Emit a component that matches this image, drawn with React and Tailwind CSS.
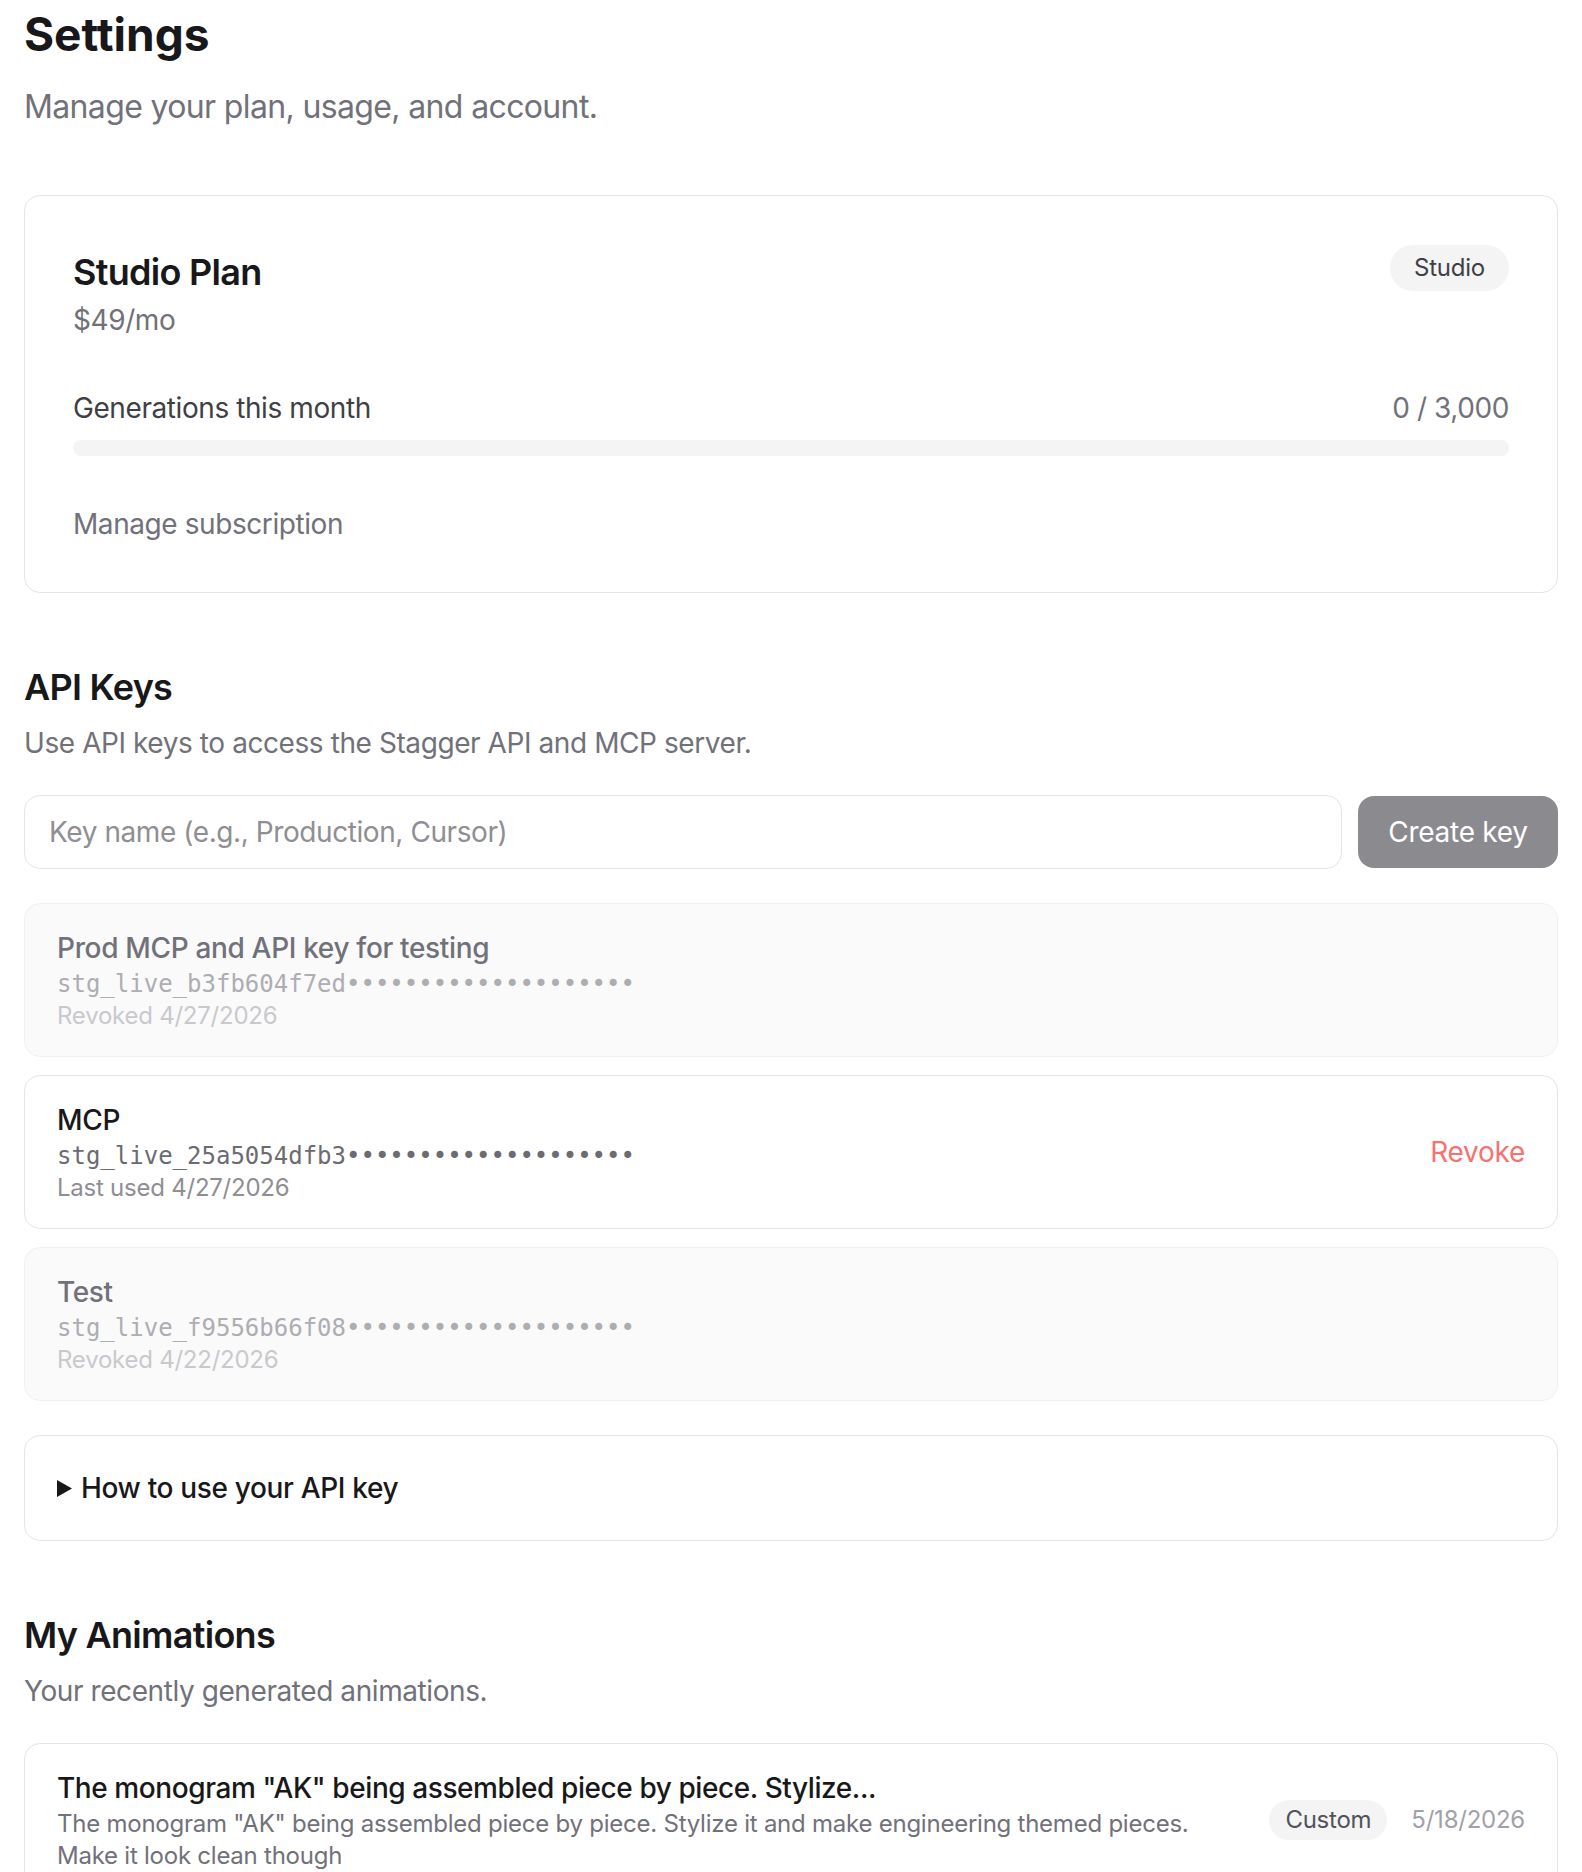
import { useState } from "react";

const keys = [
  { name: "Prod MCP and API key for testing", prefix: "stg_live_b3fb604f7ed", meta: "Revoked 4/27/2026", revoked: true },
  { name: "MCP", prefix: "stg_live_25a5054dfb3", meta: "Last used 4/27/2026", revoked: false },
  { name: "Test", prefix: "stg_live_f9556b66f08", meta: "Revoked 4/22/2026", revoked: true },
];

const dots = "••••••••••••••••••••";

export default function App() {
  const [keyName, setKeyName] = useState("");

  return (
    <div className="min-h-screen bg-white px-6 pt-[6px] pb-6 font-['Inter',sans-serif] text-[#18181b]">
      {/* Header */}
      <h1 className="text-[46px] leading-[56px] font-bold">Settings</h1>
      <p className="mt-[21px] text-[32px] leading-[48px] tracking-[-0.02em] text-[#71717a]">Manage your plan, usage, and account.</p>

      {/* Plan card */}
      <div className="mt-16 rounded-2xl border border-[#e4e4e7] p-12">
        <div className="flex items-start justify-between">
          <div>
            <h2 className="text-[36px] leading-[56px] font-semibold tracking-[-0.02em]">Studio Plan</h2>
            <p className="text-[28px] leading-[40px] tracking-[-0.015em] text-[#71717a]">$49/mo</p>
          </div>
          <span className="mt-px rounded-full bg-[#f4f4f5] px-6 py-[7px] text-[24px] leading-[32px] tracking-[-0.01em] text-[#3f3f46]">
            Studio
          </span>
        </div>
        <div className="mt-12 flex justify-between text-[28px] leading-[40px] tracking-[-0.015em]">
          <span className="text-[#3f3f46]">Generations this month</span>
          <span className="text-[#71717a]">0 / 3,000</span>
        </div>
        <div className="mt-3 h-4 rounded-full bg-[#f4f4f5]" />
        <p className="mt-12 text-[28px] leading-[40px] tracking-[-0.015em] text-[#71717a]">Manage subscription</p>
      </div>

      {/* API Keys */}
      <h2 className="mt-[66px] text-[36px] leading-[56px] font-semibold tracking-[-0.02em]">API Keys</h2>
      <p className="mt-2 text-[28px] leading-[40px] tracking-[-0.015em] text-[#71717a]">
        Use API keys to access the Stagger API and MCP server.
      </p>

      <div className="mt-8 flex items-center gap-4">
        <input
          value={keyName}
          onChange={(e) => setKeyName(e.target.value)}
          placeholder="Key name (e.g., Production, Cursor)"
          className="h-[74px] flex-1 rounded-2xl border border-[#e4e4e7] px-6 text-[28px] tracking-[-0.015em] outline-none placeholder:text-[#8e8e93]"
        />
        <button className="h-[72px] w-[200px] rounded-2xl bg-[#8b8b8f] text-[28px] tracking-[-0.01em] text-white">Create key</button>
      </div>

      <div className="mt-[34px] flex flex-col gap-[18px]">
        {keys.map((k) => (
          <div
            key={k.prefix}
            className={`flex items-center justify-between rounded-2xl border px-8 py-6 ${
              k.revoked ? "border-[#f1f1f2] bg-[#fafafa]" : "border-[#e4e4e7] bg-white"
            }`}
          >
            <div>
              <p
                className={`text-[28px] leading-[40px] font-medium tracking-[-0.012em] ${
                  k.revoked ? "text-[#71717a]" : "text-[#18181b]"
                }`}
              >
                {k.name}
              </p>
              <p
                className={`font-['DejaVu_Sans_Mono',monospace] text-[24px] leading-[32px] ${
                  k.revoked ? "text-[#adadb2]" : "text-[#6b6b71]"
                }`}
              >
                {k.prefix}
                {dots}
              </p>
              <p className={`text-[24px] leading-[32px] tracking-[-0.01em] ${k.revoked ? "text-[#c9c9cd]" : "text-[#8e8e93]"}`}>
                {k.meta}
              </p>
            </div>
            {!k.revoked && <button className="text-[28px] leading-[40px] tracking-[-0.01em] text-[#f87171]">Revoke</button>}
          </div>
        ))}
      </div>

      <div className="mt-[34px] rounded-2xl border border-[#e4e4e7] px-8 py-8">
        <div className="flex items-center gap-[9px] text-[28px] leading-[40px] font-medium tracking-[-0.012em]">
          <svg width="15" height="17" viewBox="0 0 15 17">
            <path d="M0 0 L15 8.5 L0 17 Z" fill="#18181b" />
          </svg>
          <span>How to use your API key</span>
        </div>
      </div>

      {/* My Animations */}
      <h2 className="mt-[66px] text-[36px] leading-[56px] font-semibold tracking-[-0.02em]">My Animations</h2>
      <p className="mt-2 text-[28px] leading-[40px] tracking-[-0.015em] text-[#71717a]">Your recently generated animations.</p>

      <div className="mt-8 flex items-center gap-6 rounded-2xl border border-[#e4e4e7] px-8 py-6">
        <div className="min-w-0 flex-1">
          <p className="truncate text-[28px] leading-[40px] font-medium tracking-[-0.015em]">
            The monogram "AK" being assembled piece by piece. Stylize...
          </p>
          <p className="text-[24px] leading-[32px] tracking-[-0.01em] text-[#71717a]">
            The monogram "AK" being assembled piece by piece. Stylize it and make engineering themed pieces. Make it look clean though
          </p>
        </div>
        <span className="rounded-full bg-[#f4f4f5] px-4 py-1 text-[24px] leading-[32px] tracking-[-0.01em] text-[#52525b]">Custom</span>
        <span className="text-[24px] leading-[32px] tracking-[-0.01em] text-[#a1a1aa]">5/18/2026</span>
      </div>
    </div>
  );
}
